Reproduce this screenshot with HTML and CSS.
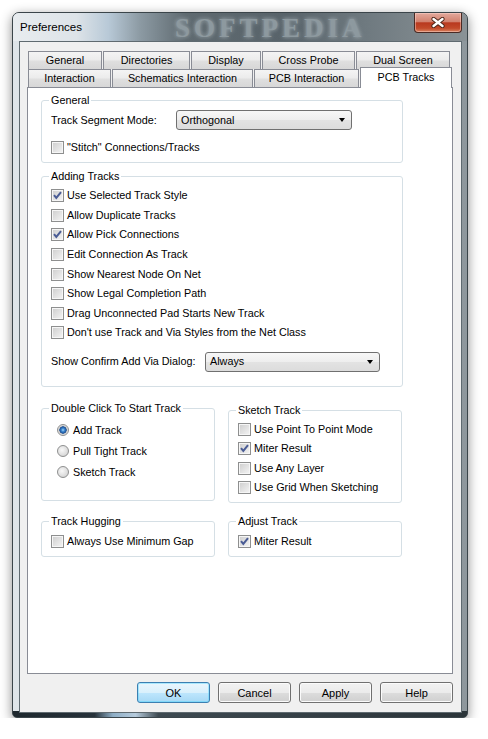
FILE: index.html
```html
<!DOCTYPE html>
<html>

<head>
    <title>Preferences</title>
    <link rel="stylesheet" href="styles.css">
</head>

<body>
    <div class="window">
        <div class="titlebar">
            <span class="title">Preferences</span>
            <span class="watermark">SOFTPEDIA</span>
            <div class="close">
                <svg width="14" height="11" viewBox="0 0 14 11">
                    <path d="M2.5 2 L11.5 9 M11.5 2 L2.5 9" stroke="#4a2418" stroke-width="4.2" stroke-linecap="round" fill="none"/>
                    <path d="M2.5 2 L11.5 9 M11.5 2 L2.5 9" stroke="#ffffff" stroke-width="2.4" stroke-linecap="round" fill="none"/>
                </svg>
            </div>
        </div>

        <div class="client">
            <div class="tabs">
                <div class="tabrow">
                    <div class="tab t-general">General</div>
                    <div class="tab t-dirs">Directories</div>
                    <div class="tab t-display">Display</div>
                    <div class="tab t-cross">Cross Probe</div>
                    <div class="tab t-dual">Dual Screen</div>
                </div>
                <div class="tabrow">
                    <div class="tab t-inter">Interaction</div>
                    <div class="tab t-schem">Schematics Interaction</div>
                    <div class="tab t-pcbi">PCB Interaction</div>
                    <div class="tab t-pcbt selected">PCB Tracks</div>
                </div>
            </div>

            <div class="panel">
                <fieldset class="group general">
                    <legend>General</legend>
                    <div class="field">
                        <span class="field-label seg">Track Segment Mode:</span>
                        <div class="combo">Orthogonal<span class="arrow"></span></div>
                    </div>
                    <div class="check"><span class="box"></span>"Stitch" Connections/Tracks</div>
                </fieldset>

                <fieldset class="group adding">
                    <legend>Adding Tracks</legend>
                    <div class="check"><span class="box on"><svg width="11" height="11" viewBox="0 0 11 11"><path d="M2 5.2 L4.3 8 L9 2.2" stroke="#4a5c95" stroke-width="2" fill="none"/></svg></span>Use Selected Track Style</div>
                    <div class="check"><span class="box"></span>Allow Duplicate Tracks</div>
                    <div class="check"><span class="box on"><svg width="11" height="11" viewBox="0 0 11 11"><path d="M2 5.2 L4.3 8 L9 2.2" stroke="#4a5c95" stroke-width="2" fill="none"/></svg></span>Allow Pick Connections</div>
                    <div class="check"><span class="box"></span>Edit Connection As Track</div>
                    <div class="check"><span class="box"></span>Show Nearest Node On Net</div>
                    <div class="check"><span class="box"></span>Show Legal Completion Path</div>
                    <div class="check"><span class="box"></span>Drag Unconnected Pad Starts New Track</div>
                    <div class="check"><span class="box"></span>Don't use Track and Via Styles from the Net Class</div>
                    <div class="field">
                        <span class="field-label via">Show Confirm Add Via Dialog:</span>
                        <div class="combo wide">Always<span class="arrow"></span></div>
                    </div>
                </fieldset>

                <div class="group-row">
                    <fieldset class="group half dblclick">
                        <legend>Double Click To Start Track</legend>
                        <div class="radio-row"><span class="radio on"></span>Add Track</div>
                        <div class="radio-row"><span class="radio"></span>Pull Tight Track</div>
                        <div class="radio-row"><span class="radio"></span>Sketch Track</div>
                    </fieldset>
                    <fieldset class="group half sketch">
                        <legend>Sketch Track</legend>
                        <div class="check"><span class="box"></span>Use Point To Point Mode</div>
                        <div class="check"><span class="box on"><svg width="11" height="11" viewBox="0 0 11 11"><path d="M2 5.2 L4.3 8 L9 2.2" stroke="#4a5c95" stroke-width="2" fill="none"/></svg></span>Miter Result</div>
                        <div class="check"><span class="box"></span>Use Any Layer</div>
                        <div class="check"><span class="box"></span>Use Grid When Sketching</div>
                    </fieldset>
                </div>

                <div class="group-row small-row">
                    <fieldset class="group half small">
                        <legend>Track Hugging</legend>
                        <div class="check"><span class="box"></span>Always Use Minimum Gap</div>
                    </fieldset>
                    <fieldset class="group half small">
                        <legend>Adjust Track</legend>
                        <div class="check"><span class="box on"><svg width="11" height="11" viewBox="0 0 11 11"><path d="M2 5.2 L4.3 8 L9 2.2" stroke="#4a5c95" stroke-width="2" fill="none"/></svg></span>Miter Result</div>
                    </fieldset>
                </div>
            </div>

            <div class="buttons">
                <button class="btn default">OK</button>
                <button class="btn">Cancel</button>
                <button class="btn">Apply</button>
                <button class="btn">Help</button>
            </div>
        </div>
    </div>
</body>
</html>
```

FILE: styles.css
```css
body {
    margin: 0;
    background-color: #ffffff;
    font-family: "Liberation Sans", Arial, sans-serif;
    font-size: 10.8px;
    line-height: 13px;
    color: #000000;
}

/* window frame */
.window {
    margin: 12px 0 0 12px;
    width: 456px;
    height: 706px;
    box-sizing: border-box;
    border: 1px solid #3b454a;
    border-radius: 7px 7px 5px 5px;
    background-color: #9aa3a8;
    background-image:
        linear-gradient(90deg, #1e282e 0%, #27323a 18%, #8eaec6 22%, #b6cbdc 27%, #3e4a51 32%, #2b3439 100%),
        linear-gradient(90deg, #dfe5e9 0%, #a9b3b9 50%, #8e979c 100%);
    background-position: bottom, top;
    background-size: 100% 6px, 100% 100%;
    background-repeat: no-repeat;
    box-shadow: 0 3px 12px rgba(0, 0, 0, 0.45);
}

.titlebar {
    position: relative;
    display: flex;
    height: 28px;
    border-radius: 6px 6px 0 0;
    background-color: #6b767c;
    background-image: linear-gradient(90deg, #e8ecef 0%, #dde3e8 14%, #b8c9d7 21%, #8c9aa3 28%, #5f6a70 38%, #58636a 60%, #6f7a80 78%, #8a9296 100%);
}

.title {
    margin: 7px 0 0 7px;
    font-size: 11.5px;
    line-height: 14px;
}

.watermark {
    position: absolute;
    left: 162px;
    top: 3px;
    font-family: "Liberation Serif", serif;
    font-weight: bold;
    font-size: 27px;
    line-height: 24px;
    letter-spacing: 4px;
    color: #8d999f;
    text-shadow: 0 0 4px #a9b5bb;
}

.close {
    margin-left: auto;
    margin-right: 5px;
    width: 48px;
    height: 20px;
    box-sizing: border-box;
    border: 1px solid #4a2a24;
    border-top: none;
    border-radius: 0 0 4px 4px;
    background: linear-gradient(#e3a99d 0%, #d2826f 45%, #b9391f 52%, #c24a2a 80%, #d98462 100%);
    box-shadow: inset 0 0 0 1px rgba(255, 220, 210, 0.45);
    display: flex;
    justify-content: center;
    align-items: center;
}

/* client area */
.client {
    margin: 0 5px 0 6px;
    height: 672px;
    box-sizing: border-box;
    border: 1px solid #5f6a70;
    background-color: #f0f0f0;
    padding: 9px 8px 0 7px;
}

.tabs {
    margin-left: 1px;
}

.tabrow {
    display: flex;
    align-items: flex-start;
    height: 18px;
}

.tab {
    height: 18px;
    box-sizing: border-box;
    border: 1px solid #898c95;
    border-bottom: none;
    margin-right: 1px;
    background: linear-gradient(#f4f4f4, #ececec 45%, #dfdfdf 55%, #d7d7d7);
    text-align: center;
    line-height: 17px;
}

.tab.selected {
    position: relative;
    z-index: 1;
    height: 21px;
    margin-top: -2px;
    margin-bottom: -1px;
    background: #ffffff;
    line-height: 18px;
}

.t-general { width: 74px; }
.t-dirs { width: 87px; }
.t-display { width: 70px; }
.t-cross { width: 93px; }
.t-dual { width: 94px; }
.t-inter { width: 83px; }
.t-schem { width: 141px; }
.t-pcbi { width: 105px; }
.t-pcbt { width: 92px; margin-right: 0; }

.panel {
    width: 426px;
    height: 587px;
    box-sizing: border-box;
    border: 1px solid #898c95;
    background-color: #ffffff;
    padding: 6px 0 0 13px;
}

/* group boxes */
.group {
    margin: 0;
    box-sizing: border-box;
    border: 1px solid #d5dfe5;
    border-radius: 3px;
    padding: 0 0 0 9px;
}

.group legend {
    padding: 0 2px;
    margin-left: -2px;
    line-height: 13px;
}

.general {
    width: 362px;
    padding-bottom: 5px;
}

.general .field {
    margin-top: 3px;
}

.general .check {
    margin-top: 8px;
    height: 19px;
}

.adding {
    width: 362px;
    margin-top: 7px;
    padding-top: 3px;
    padding-bottom: 14px;
}

.adding .check {
    height: 19.6px;
}

.adding .field {
    margin-top: 9px;
}

.field {
    display: flex;
    align-items: center;
    height: 20px;
}

.field-label.seg { width: 125px; }
.field-label.via { width: 154px; }

.combo {
    width: 176px;
    height: 20px;
    box-sizing: border-box;
    border: 1px solid #707070;
    border-radius: 3px;
    background: linear-gradient(#f7f7f7, #eeeeee 50%, #e3e3e3 50%, #dcdcdc);
    display: flex;
    align-items: center;
    justify-content: space-between;
    padding: 0 6px 0 4px;
}

.combo.wide {
    width: 175px;
}

.arrow {
    width: 0;
    height: 0;
    border-left: 3.5px solid transparent;
    border-right: 3.5px solid transparent;
    border-top: 4px solid #000000;
}

.check {
    display: flex;
    align-items: center;
}

.box {
    width: 13px;
    height: 13px;
    box-sizing: border-box;
    border: 1px solid #8e8f8f;
    background: linear-gradient(135deg, #cdcdcd, #f5f5f5);
    box-shadow: inset 0 0 0 1px #f6f6f6;
    margin-right: 3px;
    flex-shrink: 0;
}

.box svg {
    display: block;
}

.group-row {
    display: flex;
    align-items: flex-start;
    gap: 13px;
    margin-top: 15px;
}

.half {
    width: 174px;
}

.dblclick {
    height: 99px;
    padding-top: 5px;
}

.sketch {
    height: 99px;
    margin-top: 2px;
    padding-top: 3px;
}

.sketch .check {
    height: 19.4px;
}

.radio-row {
    display: flex;
    align-items: center;
    height: 21px;
    padding-left: 6px;
}

.radio {
    width: 12px;
    height: 12px;
    box-sizing: border-box;
    border: 1px solid #8e8f8f;
    border-radius: 50%;
    background: radial-gradient(circle at 40% 40%, #f8f8f8, #d2d2d2 85%);
    margin-right: 4px;
}

.radio.on {
    background: radial-gradient(circle, #a8d8f8 0, #3f88d0 1.6px, #1a4d92 3.4px, #c9c9c9 3.9px, #f0f0f0 5.5px);
}

.small-row {
    margin-top: 12px;
}

.small {
    height: 42px;
    padding-top: 4px;
}

.small .check {
    height: 19px;
}

/* dialog buttons */
.buttons {
    display: flex;
    justify-content: flex-end;
    gap: 8px;
    margin-top: 8px;
}

.btn {
    width: 73px;
    height: 21px;
    box-sizing: border-box;
    border: 1px solid #707070;
    border-radius: 3px;
    background: linear-gradient(#f2f2f2, #ebebeb 50%, #dddddd 50%, #cfcfcf);
    box-shadow: inset 0 0 0 1px #fbfbfb;
    font-family: "Liberation Sans", Arial, sans-serif;
    font-size: 11px;
    color: #000000;
    padding: 0;
}

.btn.default {
    border-color: #3c7fb1;
    background: linear-gradient(#eaf6fd, #d9f0fc 50%, #bee6fd 50%, #a7d9f5);
    box-shadow: inset 0 0 0 1px #48d4ff66;
}
```
